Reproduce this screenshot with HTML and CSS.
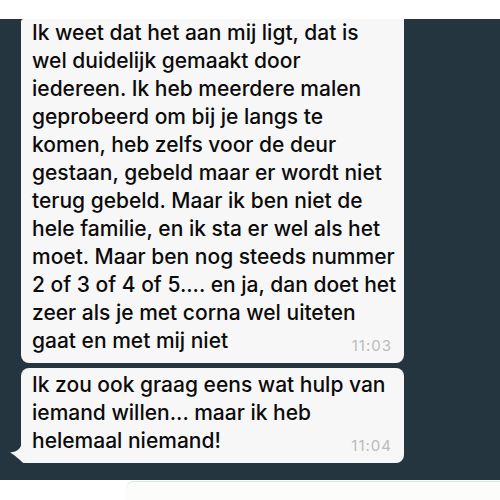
FILE: index.html
```html
<!DOCTYPE html>
<html lang="nl">
<head>
  <meta charset="UTF-8">
  <meta name="viewport" content="width=device-width, initial-scale=1.0">
  <title>Chat</title>
  <link rel="stylesheet" href="styles.css">
</head>
<body>
<div class="topbar"></div>

<div class="chat">
  <div class="bubble first">
    <p class="text">Ik weet dat het aan mij ligt, dat is<br>wel duidelijk gemaakt door<br>iedereen. Ik heb meerdere malen<br>geprobeerd om bij je langs te<br>komen, heb zelfs voor de deur<br>gestaan, gebeld maar er wordt niet<br>terug gebeld. Maar ik ben niet de<br>hele familie, en ik sta er wel als het<br>moet. Maar ben nog steeds nummer<br>2 of 3 of 4 of 5.... en ja, dan doet het<br>zeer als je met corna wel uiteten<br>gaat en met mij niet</p>
    <span class="time">11:03</span>
  </div>

  <div class="bubble last">
    <p class="text">Ik zou ook graag eens wat hulp van<br>iemand willen... maar ik heb<br>helemaal niemand!</p>
    <span class="time">11:04</span>
    <svg class="tail" width="14" height="24" viewBox="0 0 14 24">
      <path d="M12 0 C12 8 9 13 0 13.5 C5 16 8 20 14 24 L14 0 Z" fill="#f7f7f7"/>
    </svg>
  </div>
</div>

<div class="bottom">
  <div class="outgoing"></div>
</div>
</body>
</html>
```

FILE: styles.css
```css
body {
  margin: 0;
  width: 500px;
  height: 500px;
  overflow: hidden;
  background-color: #ffffff;
  font-family: Inter, "Noto Sans", sans-serif;
}
.topbar {
  height: 19px;
  background-color: #ffffff;
}
.chat {
  background-color: #243540;
  padding: 0 96px 17px 21px;
}
.bubble {
  position: relative;
  background-color: #f7f7f7;
  border-radius: 8px;
  padding: 0 10px 8px 11px;
}
.bubble.first {
  border-radius: 3px 0 8px 8px;
}
.bubble.last {
  margin-top: 5px;
  padding-top: 3px;
  border-bottom-left-radius: 4px;
}
.text {
  margin: 0;
  font-size: 21px;
  font-weight: 500;
  line-height: 28px;
  color: #0b0b0b;
  white-space: nowrap;
  font-variant-numeric: proportional-nums;
}
.time {
  position: absolute;
  right: 12px;
  bottom: 8px;
  font-size: 15px;
  letter-spacing: 1px;
  color: #bbbbbb;
}
.tail {
  position: absolute;
  left: -11px;
  bottom: 0;
}
.bottom {
  height: 20px;
  background-color: #ffffff;
  padding-left: 126px;
}
.outgoing {
  height: 19px;
  margin-top: 1px;
  border-top: 1px solid #d9efcb;
  border-top-left-radius: 8px;
  background-color: #fcfdfb;
}
```
